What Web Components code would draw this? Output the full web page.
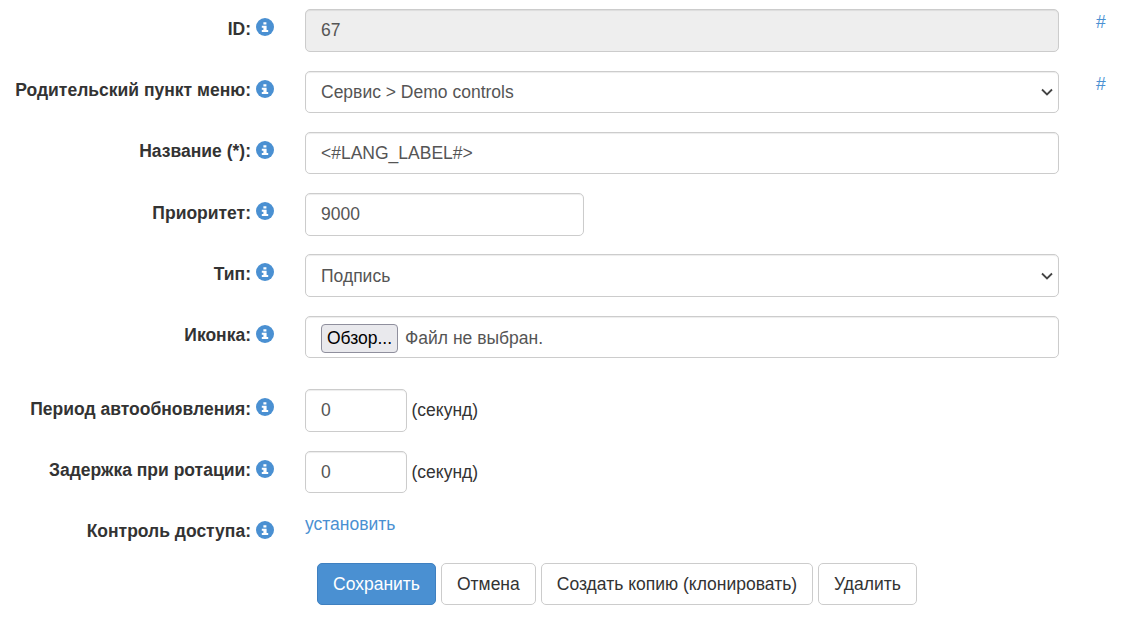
<!DOCTYPE html>
<html lang="ru">
<head>
<meta charset="utf-8">
<title>Пункт меню</title>
<style>
  body {
    margin: 0;
    background: #fff;
    color: #333;
    font: 17.5px/25px "Liberation Sans", Arial, sans-serif;
  }
</style>
</head>
<body>
<menu-form>
  <form-row label="ID:" aside="#"><text-field disabled>67</text-field></form-row>
  <form-row label="Родительский пункт меню:" aside="#"><select-field>Сервис &gt; Demo controls</select-field></form-row>
  <form-row label="Название (*):"><text-field>&lt;#LANG_LABEL#&gt;</text-field></form-row>
  <form-row label="Приоритет:"><text-field width="279">9000</text-field></form-row>
  <form-row label="Тип:"><select-field>Подпись</select-field></form-row>
  <form-row label="Иконка:" class="last-in-group"><file-field></file-field></form-row>
  <form-row label="Период автообновления:" class="period"><text-field width="102" unit="(секунд)">0</text-field></form-row>
  <form-row label="Задержка при ротации:"><text-field width="102" unit="(секунд)">0</text-field></form-row>
  <form-row label="Контроль доступа:" class="compact"><a-link>установить</a-link></form-row>
  <button-bar slot="actions">
    <x-btn primary>Сохранить</x-btn>
    <x-btn>Отмена</x-btn>
    <x-btn>Создать копию (клонировать)</x-btn>
    <x-btn>Удалить</x-btn>
  </button-bar>
</menu-form>

<script>
class MenuForm extends HTMLElement {
  constructor() {
    super();
    this.attachShadow({ mode: "open" });
    this.shadowRoot.innerHTML = `
      <style>
        :host { display: block; padding-top: 9.25px; }
      </style>
      <slot></slot>
      <slot name="actions"></slot>
    `;
  }
}

class FormRow extends HTMLElement {
  constructor() {
    super();
    this.attachShadow({ mode: "open" });
  }

  connectedCallback() {
    const aside = this.getAttribute("aside") || "";
    this.shadowRoot.innerHTML = `
      <style>
        :host {
          display: grid;
          grid-template-columns: 251px 54px 754px 37px auto;
          margin-bottom: 18.75px;
        }
        :host(.last-in-group) { margin-bottom: 31px; }
        :host(.period) { margin-bottom: 19px; }
        :host(.compact) { margin-bottom: 18.5px; }
        .label {
          padding-top: 7.5px;
          font-weight: bold;
          text-align: right;
          white-space: nowrap;
          grid-column: 1;
        }
        info-icon { grid-column: 2; margin: 9px 0 0 5px; }
        .field { grid-column: 3; }
        .aside { grid-column: 5; padding-top: 1px; color: #4a90d2; }
      </style>
      <div class="label">${this.getAttribute("label")}</div>
      <info-icon></info-icon>
      <div class="field"><slot></slot></div>
      <div class="aside">${aside}</div>
    `;
  }
}

class InfoIcon extends HTMLElement {
  constructor() {
    super();
    this.attachShadow({ mode: "open" });
    this.shadowRoot.innerHTML = `
      <style>
        :host { display: block; width: 18px; height: 18px; }
        svg { display: block; }
      </style>
      <svg width="18" height="18" viewBox="0 0 18 18">
        <circle cx="9" cy="9" r="9" fill="#4a90d2"/>
        <path fill="#fff" d="M7.4 4.2h3v2.4h-3zM5.8 7.7h4.8v4.2h1.6v2H5.8v-2h1.6V9.7H5.8z"/>
      </svg>
    `;
  }
}

const controlCss = `
  .control {
    box-sizing: border-box;
    height: 42.5px;
    padding: 8px 15px 7px;
    background: #fff;
    border: 1px solid #ccc;
    border-radius: 5px;
    box-shadow: inset 0 1px 1px rgba(0, 0, 0, .075);
    color: #555;
    white-space: nowrap;
  }
`;

class TextField extends HTMLElement {
  constructor() {
    super();
    this.attachShadow({ mode: "open" });
  }

  connectedCallback() {
    const width = this.getAttribute("width");
    const unit = this.getAttribute("unit");
    this.shadowRoot.innerHTML = `
      <style>
        ${controlCss}
        :host { display: flex; align-items: center; }
        .control { width: ${width ? width + "px" : "100%"}; }
        :host([disabled]) .control { background: #eee; }
        .unit { margin: 1px 0 0 4.5px; }
      </style>
      <div class="control"><slot></slot></div>
      ${unit ? `<span class="unit">${unit}</span>` : ""}
    `;
  }
}

class SelectField extends HTMLElement {
  constructor() {
    super();
    this.attachShadow({ mode: "open" });
    this.shadowRoot.innerHTML = `
      <style>
        ${controlCss}
        :host { display: block; }
        .control {
          display: flex;
          justify-content: space-between;
          align-items: center;
          padding-right: 5px;
        }
        svg { display: block; }
      </style>
      <div class="control">
        <span><slot></slot></span>
        <svg width="12" height="8" viewBox="0 0 12 8">
          <path d="M1 1.5l5 5 5-5" fill="none" stroke="#444" stroke-width="1.8"/>
        </svg>
      </div>
    `;
  }
}

class FileField extends HTMLElement {
  constructor() {
    super();
    this.attachShadow({ mode: "open" });
    this.shadowRoot.innerHTML = `
      <style>
        ${controlCss}
        :host { display: block; }
        .control { display: flex; align-items: center; padding-top: 9.5px; padding-bottom: 5.5px; }
        .browse {
          box-sizing: border-box;
          height: 29px;
          width: 77px;
          margin-right: 7px;
          text-align: center;
          line-height: 27px;
          color: #000;
          background: #e9e9ed;
          border: 1px solid #8f8f9d;
          border-radius: 4px;
        }
      </style>
      <div class="control">
        <div class="browse">Обзор...</div>
        <span>Файл не выбран.</span>
      </div>
    `;
  }
}

class ALink extends HTMLElement {
  constructor() {
    super();
    this.attachShadow({ mode: "open" });
    this.shadowRoot.innerHTML = `
      <style>
        :host { display: block; color: #4a90d2; }
      </style>
      <slot></slot>
    `;
  }
}

class ButtonBar extends HTMLElement {
  constructor() {
    super();
    this.attachShadow({ mode: "open" });
    this.shadowRoot.innerHTML = `
      <style>
        :host { display: flex; gap: 5px; padding-left: 317px; }
      </style>
      <slot></slot>
    `;
  }
}

class XBtn extends HTMLElement {
  constructor() {
    super();
    this.attachShadow({ mode: "open" });
    this.shadowRoot.innerHTML = `
      <style>
        :host {
          display: block;
          box-sizing: border-box;
          height: 42.5px;
          padding: 8px 15px 7px;
          background: #fff;
          border: 1px solid #ccc;
          border-radius: 5px;
          color: #333;
          white-space: nowrap;
        }
        :host([primary]) {
          background: #4a90d2;
          border-color: #3f80c0;
          color: #fff;
        }
      </style>
      <slot></slot>
    `;
  }
}

customElements.define("menu-form", MenuForm);
customElements.define("form-row", FormRow);
customElements.define("info-icon", InfoIcon);
customElements.define("text-field", TextField);
customElements.define("select-field", SelectField);
customElements.define("file-field", FileField);
customElements.define("a-link", ALink);
customElements.define("button-bar", ButtonBar);
customElements.define("x-btn", XBtn);
</script>
</body>
</html>
